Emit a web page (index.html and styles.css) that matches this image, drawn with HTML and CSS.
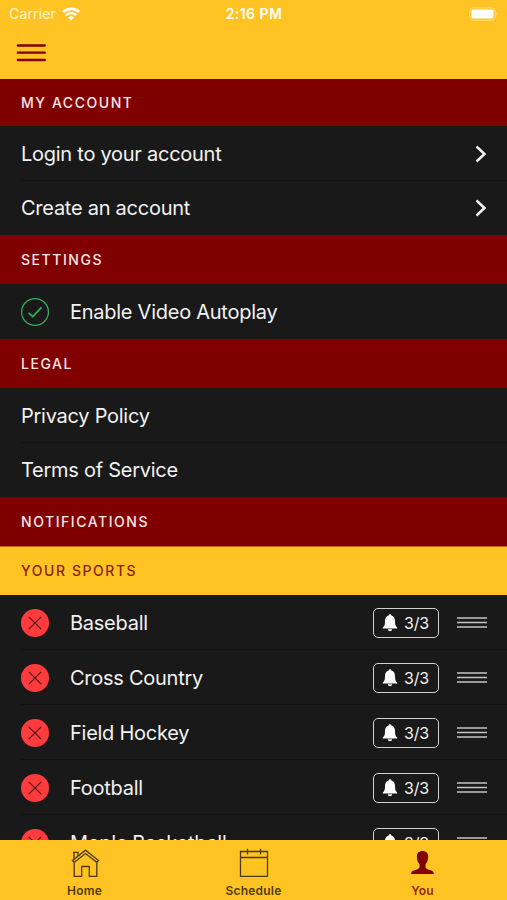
FILE: index.html
```html
<!DOCTYPE html>
<html lang="en">
<head>
    <meta charset="UTF-8">
    <meta name="viewport" content="width=device-width, initial-scale=1.0">
    <title>You</title>
    <link rel="stylesheet" href="styles.css">
</head>
<body>
    <svg class="symbols">
        <symbol id="chevron" viewBox="0 0 12 18">
            <path d="M1.5 1.5L9.5 9L1.5 16.5" fill="none" stroke="currentColor" stroke-width="2.5"/>
        </symbol>
        <symbol id="remove" viewBox="0 0 28 28">
            <circle cx="14" cy="14" r="14" fill="#ff3b3e"/>
            <path d="M7.8 7.8L20.2 20.2M20.2 7.8L7.8 20.2" stroke="#501414" stroke-width="1.2"/>
        </symbol>
        <symbol id="bell" viewBox="0 0 16 18">
            <path d="M8 0.2C8.8 0.2 9.2 0.7 9.3 1.4C12 2.2 13 4.2 13 7C13 10.7 13.6 12.2 15.2 13.5V14.5H0.8V13.5C2.4 12.2 3 10.7 3 7C3 4.2 4 2.2 6.7 1.4C6.8 0.7 7.2 0.2 8 0.2ZM5.8 15.2H10.2C10 16.5 9.2 17.2 8 17.2C6.8 17.2 6 16.5 5.8 15.2Z" fill="#fff"/>
        </symbol>
        <symbol id="drag" viewBox="0 0 30 13">
            <path d="M0 2H30M0 6.5H30M0 11H30" stroke="#c4c4c4" stroke-width="1.7"/>
        </symbol>
    </svg>

    <header>
        <div class="status-bar">
            <div class="carrier">
                <span>Carrier</span>
                <svg width="18" height="14" viewBox="0 0 18 14">
                    <path d="M1 5C5.4 0.7 12.6 0.7 17 5" fill="none" stroke="#fff" stroke-width="2.7"/>
                    <path d="M3.800 8.200C6.700 5.400 11.300 5.400 14.200 8.200" fill="none" stroke="#fff" stroke-width="2.3"/>
                    <path d="M6 10.4C7.700 8.900 10.300 8.900 12 10.4L9 13.4Z" fill="#fff"/>
                </svg>
            </div>
            <div class="time">2:16 PM</div>
            <div class="battery">
                <svg width="30" height="14" viewBox="0 0 30 14">
                    <rect x="0.8" y="0.8" width="25.4" height="12.4" rx="3.5" fill="none" stroke="#ffdf82" stroke-width="1"/>
                    <rect x="2.5" y="2.5" width="22" height="9" rx="1.8" fill="#fff"/>
                    <path d="M27.5 5C29 5.5 29 8.5 27.5 9Z" fill="#ffdf82"/>
                </svg>
            </div>
        </div>
        <svg class="menu" width="30" height="20" viewBox="0 0 30 20">
            <path d="M1.8 2.5H28.800M1.800 9.700H28.800M1.800 17H28.800" stroke="#800000" stroke-width="2.300" stroke-linecap="round"/>
        </svg>
    </header>

    <main>
        <section>
            <h2 class="first">My Account</h2>
            <ul>
                <li><span class="label">Login to your account</span><svg class="chevron"><use href="#chevron"/></svg></li>
                <li><span class="label">Create an account</span><svg class="chevron"><use href="#chevron"/></svg></li>
            </ul>
        </section>
        <section>
            <h2>Settings</h2>
            <ul class="with-icon">
                <li>
                    <svg class="round" viewBox="0 0 28 28">
                        <circle cx="14" cy="14" r="13.4" fill="none" stroke="#2fb457" stroke-width="1.2"/>
                        <path d="M7.5 14.8L11.8 18.6L20.5 9.4" fill="none" stroke="#2fb457" stroke-width="1.7"/>
                    </svg>
                    <span class="label">Enable Video Autoplay</span>
                </li>
            </ul>
        </section>
        <section>
            <h2>Legal</h2>
            <ul>
                <li><span class="label">Privacy Policy</span></li>
                <li><span class="label">Terms of Service</span></li>
            </ul>
        </section>
        <section>
            <h2>Notifications</h2>
            <h2 class="gold">Your Sports</h2>
            <ul class="with-icon">
                <li>
                    <svg class="round"><use href="#remove"/></svg>
                    <span class="label">Baseball</span>
                    <span class="alerts"><svg class="bell"><use href="#bell"/></svg>3/3</span>
                    <svg class="drag"><use href="#drag"/></svg>
                </li>
                <li>
                    <svg class="round"><use href="#remove"/></svg>
                    <span class="label">Cross Country</span>
                    <span class="alerts"><svg class="bell"><use href="#bell"/></svg>3/3</span>
                    <svg class="drag"><use href="#drag"/></svg>
                </li>
                <li>
                    <svg class="round"><use href="#remove"/></svg>
                    <span class="label">Field Hockey</span>
                    <span class="alerts"><svg class="bell"><use href="#bell"/></svg>3/3</span>
                    <svg class="drag"><use href="#drag"/></svg>
                </li>
                <li>
                    <svg class="round"><use href="#remove"/></svg>
                    <span class="label">Football</span>
                    <span class="alerts"><svg class="bell"><use href="#bell"/></svg>3/3</span>
                    <svg class="drag"><use href="#drag"/></svg>
                </li>
                <li>
                    <svg class="round"><use href="#remove"/></svg>
                    <span class="label">Men's Basketball</span>
                    <span class="alerts"><svg class="bell"><use href="#bell"/></svg>3/3</span>
                    <svg class="drag"><use href="#drag"/></svg>
                </li>
            </ul>
        </section>
    </main>

    <nav>
        <a>
            <svg width="30" height="30" viewBox="0 0 30 30" fill="none" stroke="#4d3a0b" stroke-width="1.3">
                <path d="M2.500 12.500L15.500 2.200L28.500 12.500L26.800 14.300L15.500 5.500L4.200 14.300Z"/>
                <path d="M4 11V4.300H8V8M3 4.300H8.800"/>
                <path d="M4.200 14.500V28.300H11.700V18.500H19.300V28.300H26.800V14.500"/>
            </svg>
            <span>Home</span>
        </a>
        <a>
            <svg width="30" height="30" viewBox="0 0 30 30" fill="none" stroke="#4d3a0b" stroke-width="1.3">
                <path d="M1.500 3.500H28.500V28.300H1.500ZM1.500 9.500H28.500M8.500 0.800V6.500M21.500 0.800V6.500"/>
            </svg>
            <span>Schedule</span>
        </a>
        <a class="active">
            <svg width="30" height="30" viewBox="0 0 30 30">
                <path d="M14.500 3C18.300 3 20.300 5.300 20.100 9C20 12.300 19.200 14.500 17.500 16.300V19.300C17.800 21 20 21.500 22.500 22.300C24.700 23 25.800 24 26 26H3C3.200 24 4.300 23 6.500 22.300C9 21.500 11.200 21 11.500 19.300V16.300C9.800 14.500 9 12.300 8.900 9C8.700 5.300 10.700 3 14.500 3Z" fill="#800000"/>
            </svg>
            <span>You</span>
        </a>
    </nav>
</body>
</html>
```
FILE: styles.css
```css
body {
    font-family: Inter, "Liberation Sans", sans-serif;
    background-color: #191919;
    color: #f2f2f2;
    margin: 0;
    height: 900px;
    display: flex;
    flex-direction: column;
    overflow: hidden;
}

svg {
    display: block;
    flex: none;
}

.symbols {
    width: 0;
    height: 0;
}

header {
    flex: none;
    height: 79px;
    background-color: #ffc423;
}

.status-bar {
    display: grid;
    grid-template-columns: 1fr auto 1fr;
    align-items: center;
    height: 27px;
    padding: 0 8px 0 9px;
    font-size: 14px;
    color: #fff;
}

.carrier {
    display: flex;
    align-items: center;
    gap: 6px;
    letter-spacing: 0.15px;
    color: #fff3d0;
}

.time {
    font-weight: 600;
    letter-spacing: 0.45px;
}

.battery {
    justify-self: end;
}

.menu {
    margin: 16px 0 0 16px;
}

main {
    flex: 1;
    min-height: 0;
    overflow: hidden;
}

h2 {
    box-sizing: border-box;
    height: 49px;
    margin: 0;
    padding-left: 21px;
    line-height: 49px;
    background-color: #800000;
    color: #fbe6e6;
    font-size: 14px;
    font-weight: 500;
    letter-spacing: 1.55px;
    text-transform: uppercase;
}

h2.first {
    height: 47px;
    line-height: 48px;
}

h2.gold {
    line-height: 47px;
    background-color: #ffc423;
    color: #8a2306;
    border-top: 1px solid #b06a14;
}

ul {
    list-style: none;
    margin: 0;
    padding: 0 0 0 21px;
}

li {
    box-sizing: border-box;
    display: flex;
    align-items: center;
    height: 54.5px;
    padding: 2px 20px 0 0;
    border-bottom: 1px solid #121212;
}

li:last-child {
    border-bottom-color: transparent;
}

.label {
    flex: 1;
    font-size: 20px;
    letter-spacing: -0.26px;
    white-space: nowrap;
}

.chevron {
    width: 12px;
    height: 18px;
}

.with-icon li {
    height: 55px;
}

.with-icon .label {
    margin-left: 21px;
}

.round {
    width: 28px;
    height: 28px;
}

.alerts {
    box-sizing: border-box;
    display: flex;
    align-items: center;
    gap: 6px;
    width: 66px;
    height: 30px;
    padding-left: 8px;
    margin-right: 18px;
    border: 1.5px solid #d0d0d0;
    border-radius: 5px;
    font-size: 16px;
    letter-spacing: -0.2px;
}

.bell {
    width: 16px;
    height: 18px;
}

.drag {
    width: 30px;
    height: 13px;
    margin-bottom: 2px;
}

nav {
    flex: none;
    display: flex;
    height: 60px;
    background-color: #ffc423;
    color: #4d3a0b;
    font-size: 12px;
    font-weight: 600;
    letter-spacing: 0.2px;
}

nav a {
    flex: 1;
    display: flex;
    flex-direction: column;
    align-items: center;
    padding-top: 8px;
}

nav span {
    margin-top: 5px;
}

nav .active {
    color: #93280a;
}
```
